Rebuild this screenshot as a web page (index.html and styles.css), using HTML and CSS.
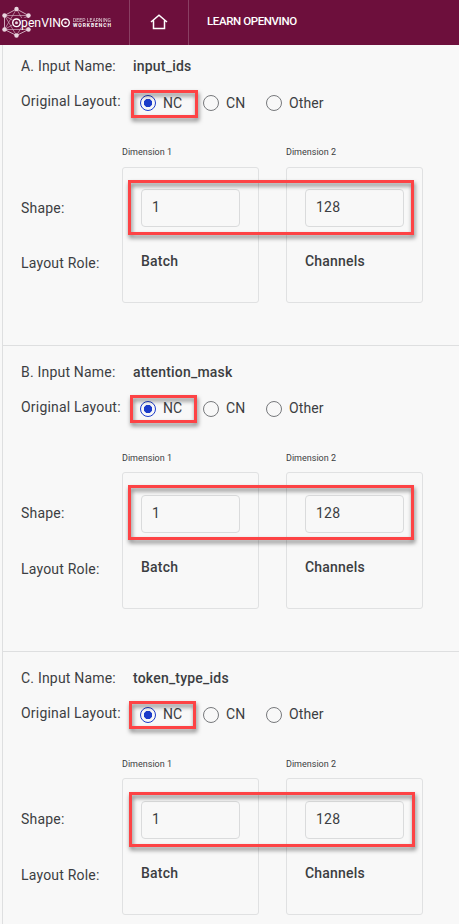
FILE: index.html
```html
<!DOCTYPE html>
<html lang="en">
<head>
<meta charset="utf-8">
<title>OpenVINO Workbench</title>
<link rel="stylesheet" href="styles.css">
</head>
<body>
<header class="topbar">
  <div class="brand">
    <svg class="logo" width="113" height="44" viewBox="0 0 113 44" fill="none" stroke="#e9d5df">
      <g stroke-width=".9" opacity=".85">
        <path d="M16.500 9 28.500 15.500V29.500L16.500 35.500 4.500 29.500V15.500Z"/>
        <path d="M4.500 15.500 28.500 29.500M28.500 15.500 4.500 29.500M16.500 9 4.500 29.500H28.500ZM4.500 15.500H28.500L16.500 35.500Z" opacity=".7"/>
      </g>
      <path d="M12 22.500a4.500 4.500 0 0 1 4.500-4.500H70V27.500H16.500A4.500 4.500 0 0 1 12 22.500Z" fill="#6d0f3c" stroke="none"/>
      <g fill="#e9d5df" stroke="none">
        <circle cx="16.500" cy="9" r="2.200"/><circle cx="28.500" cy="15.500" r="2.200"/><circle cx="28.500" cy="29.500" r="2.200"/>
        <circle cx="16.500" cy="35.500" r="2.200"/><circle cx="4.500" cy="29.500" r="2.200"/><circle cx="4.500" cy="15.500" r="2.200"/>
      </g>
      <circle cx="16.500" cy="22.800" r="3.800" stroke="#fff" stroke-width="1.400"/>
      <circle cx="16.500" cy="22.800" r="1.500" fill="#e9d5df" stroke="none"/>
      <g fill="#fff" stroke="none">
        <text class="logo-name" x="21" y="27" textLength="40" lengthAdjust="spacingAndGlyphs">penVIN</text>
        <text class="logo-line" x="73" y="21.500" textLength="38">DEEP LEARNING</text>
        <text class="logo-line logo-strong" x="73" y="27" textLength="38">WORKBENCH</text>
      </g>
      <circle cx="65.500" cy="22.800" r="3.800" stroke="#fff" stroke-width="1.400"/>
      <circle cx="65.500" cy="22.800" r="1.300" fill="#e9d5df" stroke="none"/>
    </svg>
  </div>
  <a class="home">
    <svg width="18" height="16" viewBox="0 0 18 16" fill="none" stroke="#fff" stroke-width="1.500"><path d="M1 8 9 1.200 17 8M3.500 6.500V14.500H14.500V6.500"/></svg>
  </a>
  <a class="learn">LEARN OPENVINO</a>
</header>
<main class="inputs">
  <section class="input">
    <div class="row name-row"><span class="label">A. Input Name:</span><b class="name">input_ids</b></div>
    <div class="row layout-row"><span class="label">Original Layout:</span>
      <div class="radios"><span class="radio checked">NC</span><span class="radio cn">CN</span><span class="radio">Other</span></div></div>
    <div class="row shape-row">
      <div class="side"><span class="label">Shape:</span><span class="label">Layout Role:</span></div>
      <div class="dim"><small>Dimension 1</small><div class="card"><div class="field">1</div><b>Batch</b></div></div>
      <div class="dim"><small>Dimension 2</small><div class="card"><div class="field">128</div><b>Channels</b></div></div>
    </div>
    <i class="mark mark-layout"></i><i class="mark mark-shape"></i>
  </section>
  <section class="input input-b">
    <div class="row name-row"><span class="label">B. Input Name:</span><b class="name">attention_mask</b></div>
    <div class="row layout-row"><span class="label">Original Layout:</span>
      <div class="radios"><span class="radio checked">NC</span><span class="radio cn">CN</span><span class="radio">Other</span></div></div>
    <div class="row shape-row">
      <div class="side"><span class="label">Shape:</span><span class="label">Layout Role:</span></div>
      <div class="dim"><small>Dimension 1</small><div class="card"><div class="field">1</div><b>Batch</b></div></div>
      <div class="dim"><small>Dimension 2</small><div class="card"><div class="field">128</div><b>Channels</b></div></div>
    </div>
    <i class="mark mark-layout"></i><i class="mark mark-shape"></i>
  </section>
  <section class="input input-c">
    <div class="row name-row"><span class="label">C. Input Name:</span><b class="name">token_type_ids</b></div>
    <div class="row layout-row"><span class="label">Original Layout:</span>
      <div class="radios"><span class="radio checked">NC</span><span class="radio cn">CN</span><span class="radio">Other</span></div></div>
    <div class="row shape-row">
      <div class="side"><span class="label">Shape:</span><span class="label">Layout Role:</span></div>
      <div class="dim"><small>Dimension 1</small><div class="card"><div class="field">1</div><b>Batch</b></div></div>
      <div class="dim"><small>Dimension 2</small><div class="card"><div class="field">128</div><b>Channels</b></div></div>
    </div>
    <i class="mark mark-layout"></i><i class="mark mark-shape"></i>
  </section>
</main>
</body>
</html>
```
FILE: styles.css
```css
*, *::before { box-sizing: border-box; }
body {
  margin: 0;
  height: 924px;
  overflow: hidden;
  background: #f8f8f8;
  color: #3c3e42;
  font: 14px/20px Roboto, sans-serif;
  letter-spacing: .2px;
}
b { font-weight: 500; }
.topbar {
  position: relative;
  z-index: 1;
  display: flex;
  height: 45px;
  background: #6d0f3c;
  color: #fff;
}
.brand { width: 130px; border-right: 1px solid #8a3f63; }
.logo { display: block; }
.logo-name { font: 12.5px Roboto, sans-serif; letter-spacing: 0; }
.logo-line { font: 5px Roboto, sans-serif; letter-spacing: 0; opacity: .8; }
.logo-strong { font-weight: 700; opacity: 1; }
.home {
  display: flex;
  width: 59px;
  padding: 14px 0 0 20px;
  border-right: 1px solid #8a3f63;
}
.learn {
  padding: 11px 0 0 18px;
  font-size: 11.5px;
  font-weight: 500;
  letter-spacing: -.4px;
}
.inputs { margin: -5px 0 0 2px; border-left: 1px solid #dedfe0; }
.input {
  position: relative;
  height: 306px;
  padding: 16px 0 0 18px;
  border-bottom: 1px solid #dedfe0;
}
.row { display: flex; }
.name-row .label { width: 112px; }
.layout-row { margin-top: 15px; }
.layout-row .label { width: 119px; }
.radios { display: flex; padding-top: 2px; }
.radio { display: flex; height: 20px; line-height: 18px; letter-spacing: .1px; }
.input:first-child .radio { line-height: 20px; }
.radio.checked, .radio.cn { width: 63px; }
.radio::before {
  content: "";
  width: 16px;
  height: 16px;
  margin: 2px 7px 0 0;
  border: 1px solid #77797c;
  border-radius: 50%;
}
.radio.checked::before {
  border-color: #1b3bc9;
  background: radial-gradient(circle, #1b3bc9 3.8px, transparent 4.5px);
}
.shape-row { margin-top: 29px; }
.side { display: flex; flex-direction: column; gap: 36px; width: 101px; padding-top: 55px; }
.input:first-child .side { gap: 35px; padding-top: 56px; }
.dim { width: 137px; margin-right: 27px; }
.dim small { display: block; height: 24px; font-size: 9px; line-height: 21px; letter-spacing: 0; }
.card {
  height: 137px;
  padding: 22px 18px 0;
  border: 1px solid #e0e1e2;
  border-radius: 3px;
}
.input:first-child .card { height: 136px; margin-top: 25px; padding-top: 21px; }
.input:first-child small { margin-bottom: -24px; }
.field {
  width: 99px;
  height: 38px;
  margin-bottom: 24px;
  padding: 0 10px;
  border: 1px solid #dadbdc;
  border-radius: 4px;
  line-height: 34px;
}
.card b { display: block; }
.mark {
  position: absolute;
  border: 3px solid #fd4345;
  filter: drop-shadow(1px 3px 2px rgba(0, 0, 0, .5));
}
.mark-layout { left: 128px; top: 50px; width: 67px; height: 28px; }
.mark-shape { left: 125px; top: 140px; width: 286px; height: 55px; }
.input-b .mark-layout { left: 127px; top: 49px; }
.input-b .mark-shape { top: 139px; }
.input-c { border-bottom: 0; }
.input-c .mark-layout { left: 126px; top: 49px; }
.input-c .mark-shape { left: 126px; top: 140px; }
```
